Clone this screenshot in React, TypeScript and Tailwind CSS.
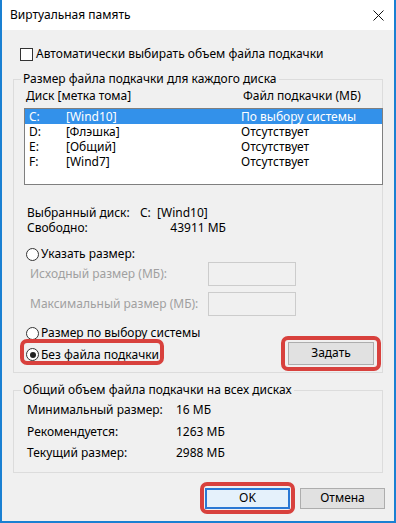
import React from "react";

const F = { fontFamily: '"Noto Sans", "Open Sans", sans-serif' };

function Radio({ checked }: { checked?: boolean }) {
  return (
    <span className="relative inline-block w-[13px] h-[13px] rounded-full border border-[#333] bg-white shrink-0">
      {checked && <span className="absolute left-[2.5px] top-[2.5px] w-[6px] h-[6px] rounded-full bg-[#222]" />}
    </span>
  );
}

function GroupBox({ label, className, children }: { label: string; className?: string; children: React.ReactNode }) {
  return (
    <div className={"relative border border-[#dcdcdc] " + (className ?? "")}>
      <span className="absolute left-[7px] top-[-9px] px-[2px] bg-[#f0f0f0] leading-[16px] text-[#000]">{label}</span>
      {children}
    </div>
  );
}

export default function App() {
  const rows = [
    ["C:", "[Wind10]", "По выбору системы"],
    ["D:", "[Флэшка]", "Отсутствует"],
    ["E:", "[Общий]", "Отсутствует"],
    ["F:", "[Wind7]", "Отсутствует"],
  ];
  return (
    <div style={F} className="w-[396px] h-[523px] bg-[#f0f0f0] border-l-2 border-r-2 border-b-2 border-[#1a80d2] text-[12px] text-black flex flex-col overflow-hidden">
      {/* title bar */}
      <div className="h-[30px] bg-white flex items-center justify-between pl-[8px] pr-[8px] shrink-0">
        <span className="text-[12px] leading-[16px]">Виртуальная память</span>
        <svg width="11" height="11" viewBox="0 0 11 11" className="mr-[2px]">
          <path d="M0.5 0.5 L10.5 10.5 M10.5 0.5 L0.5 10.5" stroke="#111" strokeWidth="1" />
        </svg>
      </div>

      {/* auto checkbox */}
      <div className="mt-[16px] ml-[18px] flex items-center h-[16px] leading-[16px]">
        <span className="w-[13px] h-[13px] border border-[#333] bg-white shrink-0" />
        <span className="ml-[3px]">Автоматически выбирать объем файла подкачки</span>
      </div>

      {/* group 1 */}
      <GroupBox label="Размер файла подкачки для каждого диска" className="mt-[17px] ml-[11px] w-[370px] pb-[7px]">
        <div className="mt-[8px] flex leading-[16px]">
          <span className="ml-[12px] w-[217px]">Диск [метка тома]</span>
          <span>Файл подкачки (МБ)</span>
        </div>
        <div className="mt-[4px] ml-[10px] w-[359px] h-[77px] border border-[#7f7f7f] bg-white">
          {rows.map((r, i) => (
            <div key={i} className={"flex items-center h-[15px] leading-[14px] " + (i === 0 ? "bg-[#3391ea] text-white" : "")}>
              <span className="pl-[4px] w-[41px]">{r[0]}</span>
              <span className="w-[175px]">{r[1]}</span>
              <span>{r[2]}</span>
            </div>
          ))}
        </div>

        <div className="mt-[20px] ml-[13px] leading-[15px]">
          <div className="flex">
            <span className="w-[113px]">Выбранный диск:</span>
            <span>C:&nbsp;&nbsp;[Wind10]</span>
          </div>
          <div className="flex">
            <span className="w-[113px]">Свободно:</span>
            <span className="w-[86px] text-right">43911 МБ</span>
          </div>
        </div>

        <div className="mt-[11px] ml-[12px] flex items-center h-[16px] leading-[16px]">
          <Radio />
          <span className="ml-[2px]">Указать размер:</span>
        </div>

        <div className="ml-[16px] flex flex-col gap-[6px] text-[#a0a0a0]">
          <div className="flex items-center h-[24px]">
            <span className="w-[178px]">Исходный размер (МБ):</span>
            <span className="w-[88px] h-[24px] border border-[#cccccc]" />
          </div>
          <div className="flex items-center h-[24px]">
            <span className="w-[178px]">Максимальный размер (МБ):</span>
            <span className="w-[88px] h-[24px] border border-[#cccccc]" />
          </div>
        </div>

        <div className="mt-[9px] ml-[12px] flex items-center h-[16px] leading-[16px]">
          <Radio />
          <span className="ml-[2px]">Размер по выбору системы</span>
        </div>

        <div className="relative flex items-center justify-between h-[24px] ml-[12px] mr-[8px]">
          <div className="relative flex items-center h-[16px] leading-[16px] mt-[3px]">
            <Radio checked />
            <span className="ml-[2px]">Без файла подкачки</span>
            <span className="absolute left-[-6px] top-[-8px] w-[144px] h-[26px] border-[4px] border-[#d8413d] rounded-[7px]" />
          </div>
          <div className="relative">
            <button className="w-[86px] h-[23px] bg-[#e1e1e1] border border-[#adadad] leading-[16px]">Задать</button>
            <span className="absolute left-[-7px] top-[-6px] w-[100px] h-[35px] border-[4px] border-[#d8413d] rounded-[7px]" />
          </div>
        </div>
      </GroupBox>

      {/* group 2 */}
      <GroupBox label="Общий объем файла подкачки на всех дисках" className="mt-[17px] ml-[11px] w-[370px] pt-[8px] pb-[8px]">
        <div className="ml-[13px] leading-[21.5px]">
          <div className="flex"><span className="w-[149px]">Минимальный размер:</span><span>16 МБ</span></div>
          <div className="flex"><span className="w-[149px]">Рекомендуется:</span><span>1263 МБ</span></div>
          <div className="flex"><span className="w-[149px]">Текущий размер:</span><span>2988 МБ</span></div>
        </div>
      </GroupBox>

      {/* buttons */}
      <div className="mt-[15px] ml-[203px] flex gap-[10px]">
        <div className="relative">
          <button className="w-[85px] h-[21px] bg-[#e5f1fb] border-2 border-[#2a78d4] leading-[16px]">OK</button>
          <span className="absolute left-[-5px] top-[-6px] w-[95px] h-[32px] border-[4px] border-[#d8413d] rounded-[7px]" />
        </div>
        <button className="w-[85px] h-[21px] bg-[#e1e1e1] border border-[#adadad] leading-[16px]">Отмена</button>
      </div>
    </div>
  );
}
